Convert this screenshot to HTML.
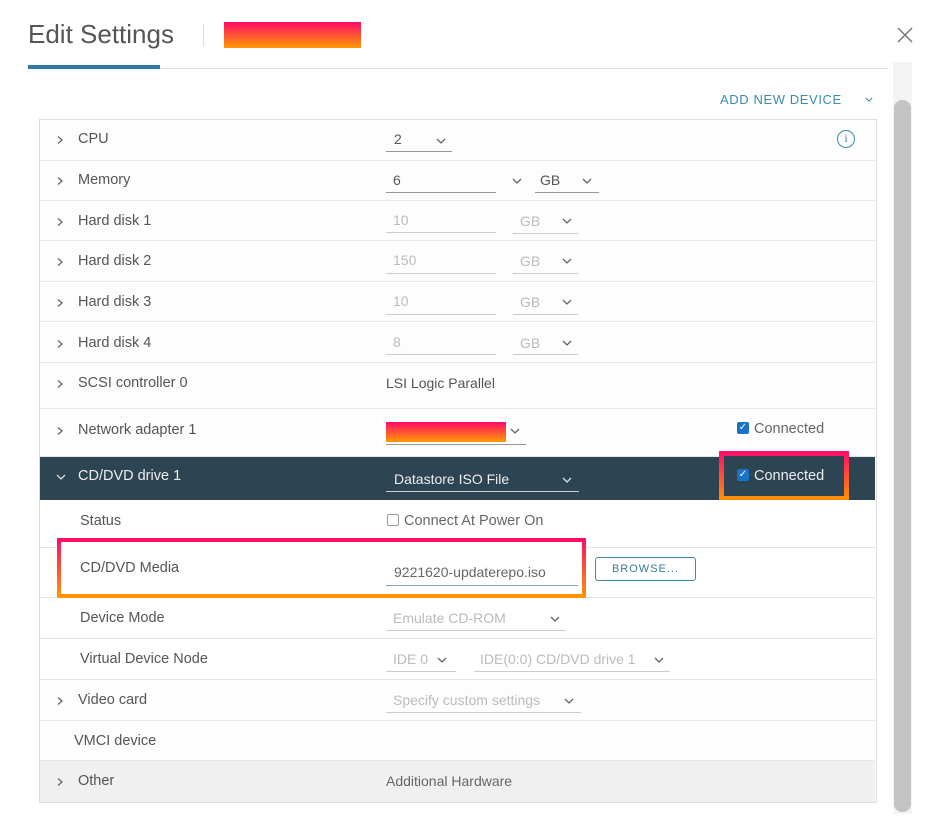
<!DOCTYPE html>
<html><head><style>
*{margin:0;padding:0;box-sizing:border-box}
body{width:936px;height:820px;background:#fff;font-family:"Liberation Sans",sans-serif;position:relative;overflow:hidden;color:#555}
.a{position:absolute}
.row{position:absolute;left:40px;width:835px;border-bottom:1px solid #e6e6e6;background:#fdfdfd}
.lbl{position:absolute;font-size:14.5px;color:#555;white-space:nowrap}
.chev{position:absolute;width:8px;height:10px}
.ul{position:absolute;border-bottom:1px solid #999;height:1px}
.ul.l{border-bottom-color:#ccc}
.v{position:absolute;font-size:14px;white-space:nowrap}
.g{color:#bbb}
.dd{position:absolute;width:10px;height:6px}
.grad{background:linear-gradient(#ff0a6a,#ff9a00)}
</style></head><body>
<svg width="0" height="0" style="position:absolute"><defs>
<symbol id="r" viewBox="0 0 8 10"><path d="M2 1.5 L6 5 L2 8.5" fill="none" stroke="#666" stroke-width="1.3"/></symbol>
<symbol id="d" viewBox="0 0 10 6"><path d="M1 1 L5 5 L9 1" fill="none" stroke="#666" stroke-width="1.3"/></symbol>
<symbol id="dw" viewBox="0 0 10 6"><path d="M1 1 L5 5 L9 1" fill="none" stroke="#ddd" stroke-width="1.3"/></symbol>
</defs></svg>
<div class="a" style="left:28px;top:19px;font-size:26px;color:#555">Edit Settings</div>
<div class="a" style="left:203px;top:24px;width:1px;height:22px;background:#ddd"></div>
<div class="a grad" style="left:224px;top:22px;width:137px;height:26px"></div>
<svg class="a" style="left:897px;top:27px" width="16" height="16"><path d="M1 1 L15 15 M15 1 L1 15" stroke="#777" stroke-width="1.5"/></svg>
<div class="a" style="left:28px;top:68px;width:860px;height:1px;background:#ddd"></div>
<div class="a" style="left:28px;top:65px;width:132px;height:4px;background:#2f7aa0"></div>
<div class="a" style="left:720px;top:92px;font-size:13px;color:#3a8bb0;letter-spacing:0.6px">ADD NEW DEVICE</div>
<svg class="a dd" style="left:865px;top:97px;width:8px;height:5px" viewBox="0 0 10 6"><path d="M1 1 L5 5 L9 1" fill="none" stroke="#3a8bb0" stroke-width="1.3"/></svg>
<div class="a" style="left:893px;top:62px;width:19px;height:752px;background:#f4f4f4"></div>
<div class="a" style="left:894px;top:100px;width:17px;height:712px;background:#c4c4c4;border-radius:8px"></div>
<div class="a" style="left:39px;top:119px;width:838px;height:684px;border:1px solid #ddd"></div>

<div class="row" style="top:120px;height:41px"></div>
<svg class="chev" style="left:56px;top:135px"><use href="#r"/></svg><div class="lbl" style="left:78px;top:131px">CPU</div>
<div class="v" style="left:394px;top:131px">2</div><svg class="dd" style="left:436px;top:138px"><use href="#d"/></svg><div class="ul" style="left:386px;top:151px;width:66px"></div>
<div class="a" style="left:837px;top:130px;width:18px;height:18px;border:1.5px solid #3a8bb0;border-radius:50%;color:#3a8bb0;font-size:12px;text-align:center;line-height:15px;font-family:'Liberation Serif',serif">i</div>

<div class="row" style="top:161px;height:40px"></div>
<svg class="chev" style="left:56px;top:176px"><use href="#r"/></svg><div class="lbl" style="left:78px;top:172px">Memory</div>
<div class="v" style="left:393px;top:172px">6</div><div class="ul" style="left:386px;top:192px;width:110px"></div>
<svg class="dd" style="left:512px;top:178px"><use href="#d"/></svg>
<div class="v" style="left:540px;top:172px">GB</div><svg class="dd" style="left:582px;top:178px"><use href="#d"/></svg><div class="ul" style="left:535px;top:192px;width:64px"></div>

<div class="row" style="top:201px;height:40px"></div>
<svg class="chev" style="left:56px;top:217px"><use href="#r"/></svg><div class="lbl" style="left:78px;top:213px">Hard disk 1</div>
<div class="v g" style="left:393px;top:212px">10</div><div class="ul l" style="left:386px;top:232px;width:110px"></div>
<div class="v g" style="left:520px;top:213px">GB</div><svg class="dd" style="left:562px;top:218px"><use href="#d"/></svg><div class="ul l" style="left:513px;top:233px;width:65px"></div>

<div class="row" style="top:241px;height:41px"></div>
<svg class="chev" style="left:56px;top:257px"><use href="#r"/></svg><div class="lbl" style="left:78px;top:253px">Hard disk 2</div>
<div class="v g" style="left:393px;top:252px">150</div><div class="ul l" style="left:386px;top:273px;width:110px"></div>
<div class="v g" style="left:520px;top:253px">GB</div><svg class="dd" style="left:562px;top:258px"><use href="#d"/></svg><div class="ul l" style="left:513px;top:273px;width:65px"></div>

<div class="row" style="top:282px;height:40px"></div>
<svg class="chev" style="left:56px;top:298px"><use href="#r"/></svg><div class="lbl" style="left:78px;top:294px">Hard disk 3</div>
<div class="v g" style="left:393px;top:293px">10</div><div class="ul l" style="left:386px;top:314px;width:110px"></div>
<div class="v g" style="left:520px;top:294px">GB</div><svg class="dd" style="left:562px;top:299px"><use href="#d"/></svg><div class="ul l" style="left:513px;top:314px;width:65px"></div>

<div class="row" style="top:322px;height:41px"></div>
<svg class="chev" style="left:56px;top:339px"><use href="#r"/></svg><div class="lbl" style="left:78px;top:335px">Hard disk 4</div>
<div class="v g" style="left:393px;top:334px">8</div><div class="ul l" style="left:386px;top:354px;width:110px"></div>
<div class="v g" style="left:520px;top:335px">GB</div><svg class="dd" style="left:562px;top:340px"><use href="#d"/></svg><div class="ul l" style="left:513px;top:354px;width:65px"></div>

<div class="row" style="top:363px;height:46px"></div>
<svg class="chev" style="left:56px;top:379px"><use href="#r"/></svg><div class="lbl" style="left:78px;top:375px">SCSI controller 0</div>
<div class="v" style="left:386px;top:375px">LSI Logic Parallel</div>

<div class="row" style="top:409px;height:48px"></div>
<svg class="chev" style="left:56px;top:426px"><use href="#r"/></svg><div class="lbl" style="left:78px;top:422px">Network adapter 1</div>
<div class="a grad" style="left:386px;top:422px;width:120px;height:20px"></div><svg class="dd" style="left:510px;top:428px"><use href="#d"/></svg><div class="ul" style="left:386px;top:444px;width:140px"></div>
<div class="a" style="left:737px;top:422px;width:12px;height:12px;background:#1a73c8;border-radius:2px;color:#fff;font-size:10px;line-height:12px;text-align:center">✓</div>
<div class="lbl" style="left:754px;top:421px;color:#666">Connected</div>

<div class="a" style="left:40px;top:457px;width:835px;height:43px;background:#2d4552"></div>
<svg class="dd" style="left:56px;top:474px"><use href="#dw"/></svg>
<div class="lbl" style="left:78px;top:468px;color:#eee">CD/DVD drive 1</div>
<div class="v" style="left:394px;top:471px;color:#eee">Datastore ISO File</div><svg class="dd" style="left:562px;top:477px"><use href="#dw"/></svg>
<div class="a" style="left:386px;top:491px;width:193px;height:1px;background:#ccc"></div>
<div class="a grad" style="left:719px;top:451px;width:130px;height:51px"></div>
<div class="a" style="left:724px;top:456px;width:120px;height:40px;background:#2d4552"></div>
<div class="a" style="left:737px;top:469px;width:12px;height:12px;background:#1a73c8;border-radius:2px;color:#fff;font-size:10px;line-height:12px;text-align:center">✓</div>
<div class="lbl" style="left:754px;top:468px;color:#eee">Connected</div>

<div class="row" style="top:500px;height:48px;background:#fff"></div>
<div class="lbl" style="left:80px;top:513px">Status</div>
<div class="a" style="left:387px;top:514px;width:12px;height:12px;border:1px solid #999;border-radius:2px"></div>
<div class="lbl" style="left:404px;top:513px;color:#666">Connect At Power On</div>

<div class="row" style="top:548px;height:50px;background:#fff"></div>
<div class="a grad" style="left:57px;top:538px;width:529px;height:61px"></div>
<div class="a" style="left:61px;top:542px;width:521px;height:52px;background:#fff"></div>
<div class="lbl" style="left:80px;top:560px">CD/DVD Media</div>
<div class="v" style="left:394px;top:564px;color:#666">9221620-updaterepo.iso</div>
<div class="a" style="left:386px;top:585px;width:192px;height:1px;background:#7fa7b5"></div>
<div class="a" style="left:595px;top:557px;width:101px;height:24px;border:1px solid #3a8bb0;border-radius:3px;font-size:11px;color:#3a7a9a;text-align:center;line-height:22px;letter-spacing:1px">BROWSE...</div>

<div class="row" style="top:598px;height:41px;background:#fff"></div>
<div class="lbl" style="left:80px;top:610px">Device Mode</div>
<div class="v g" style="left:393px;top:610px">Emulate CD-ROM</div><svg class="dd" style="left:550px;top:616px"><use href="#d"/></svg><div class="ul l" style="left:386px;top:630px;width:180px"></div>

<div class="row" style="top:639px;height:41px;background:#fff"></div>
<div class="lbl" style="left:80px;top:651px">Virtual Device Node</div>
<div class="v g" style="left:393px;top:651px">IDE 0</div><svg class="dd" style="left:437px;top:657px"><use href="#d"/></svg><div class="ul l" style="left:386px;top:671px;width:70px"></div>
<div class="v g" style="left:480px;top:651px">IDE(0:0) CD/DVD drive 1</div><svg class="dd" style="left:654px;top:657px"><use href="#d"/></svg><div class="ul l" style="left:474px;top:671px;width:196px"></div>

<div class="row" style="top:680px;height:41px"></div>
<svg class="chev" style="left:56px;top:696px"><use href="#r"/></svg><div class="lbl" style="left:78px;top:692px">Video card</div>
<div class="v g" style="left:393px;top:692px">Specify custom settings</div><svg class="dd" style="left:564px;top:698px"><use href="#d"/></svg><div class="ul l" style="left:386px;top:712px;width:195px"></div>

<div class="row" style="top:721px;height:40px"></div>
<div class="lbl" style="left:74px;top:733px">VMCI device</div>

<div class="row" style="top:761px;height:41px;background:#f0f0f0;border-bottom:none"></div>
<svg class="chev" style="left:56px;top:777px"><use href="#r"/></svg><div class="lbl" style="left:78px;top:773px">Other</div>
<div class="v" style="left:386px;top:773px;color:#666">Additional Hardware</div>
</body></html>
